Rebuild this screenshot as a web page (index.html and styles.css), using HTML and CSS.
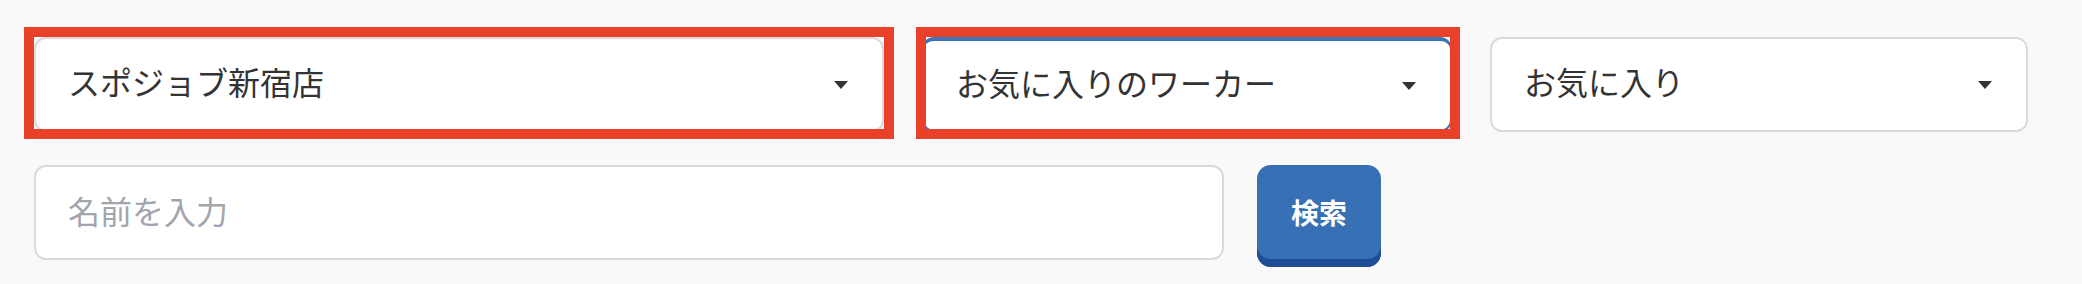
FILE: index.html
```html
<!DOCTYPE html>
<html lang="ja">
<head>
  <meta charset="UTF-8">
  <meta name="viewport" content="width=device-width, initial-scale=1.0">
  <title>ワーカー検索</title>
  <link rel="stylesheet" href="styles.css">
</head>
<body>
  <div class="search">
    <div class="filters">
      <div class="marked marked-shop">
        <div class="select shop">
          <span class="select-value">スポジョブ新宿店</span>
          <span class="caret"></span>
        </div>
      </div>
      <div class="marked marked-worker">
        <div class="select worker focused">
          <span class="select-value">お気に入りのワーカー</span>
          <span class="caret"></span>
        </div>
      </div>
      <div class="select favorite">
        <span class="select-value">お気に入り</span>
        <span class="caret"></span>
      </div>
    </div>
    <div class="name-row">
      <input type="text" class="name-input" placeholder="名前を入力">
      <button class="search-button">検索</button>
    </div>
  </div>
</body>
</html>
```

FILE: styles.css
```css
body {
  margin: 0;
  padding: 0;
  background: #f9f9f9;
  font-family: "Noto Sans CJK JP", "Noto Sans", sans-serif;
  color: #333;
}

.search {
  padding: 37px 0 0 34px;
}

.filters {
  display: flex;
  gap: 38px;
}

/* red annotation boxes drawn over the fields */
.marked {
  position: relative;
}

.marked::after {
  content: "";
  position: absolute;
  top: -10px;
  bottom: -7px;
  border: 10px solid #e9402a;
  pointer-events: none;
}

.marked-shop::after {
  left: -10px;
  right: -10px;
}

.marked-worker::after {
  left: -6px;
  right: -8px;
}

.select {
  display: flex;
  align-items: center;
  justify-content: space-between;
  box-sizing: border-box;
  height: 95px;
  padding: 0 34px 0 32px;
  background: #fff;
  border: 2px solid #dadada;
  border-radius: 12px;
  font-size: 32px;
}

.select-value {
  margin-bottom: 7px;
}

.select.focused {
  border-color: #3a74ba;
  border-top-width: 4px;
}

.shop {
  width: 850px;
}

.worker {
  width: 530px;
}

.favorite {
  width: 538px;
}

.caret {
  width: 0;
  height: 0;
  border-left: 7.5px solid transparent;
  border-right: 7.5px solid transparent;
  border-top: 8px solid #333;
}

.name-row {
  display: flex;
  align-items: flex-start;
  gap: 33px;
  margin-top: 33px;
}

.name-input {
  box-sizing: border-box;
  width: 1190px;
  height: 95px;
  padding: 0 32px 6px;
  background: #fff;
  border: 2px solid #dadada;
  border-radius: 12px;
  font-family: inherit;
  font-size: 32px;
  color: #333;
  outline: none;
}

.name-input::placeholder {
  color: #a1a5ae;
}

.search-button {
  box-sizing: border-box;
  width: 124px;
  height: 102px;
  padding: 0 0 8px;
  border: none;
  border-radius: 14px;
  background: #3870b6;
  box-shadow: inset 0 -8px 0 #1f4d95;
  color: #fff;
  font-family: inherit;
  font-size: 28px;
  font-weight: bold;
  cursor: pointer;
}
```
